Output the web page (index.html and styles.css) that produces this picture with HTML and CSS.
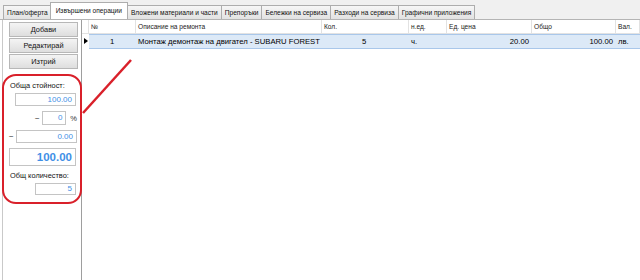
FILE: index.html
```html
<!DOCTYPE html>
<html>
<head>
<meta charset="utf-8">
<link rel="stylesheet" href="styles.css">
</head>
<body>
<div class="app">
  <div class="tabbar">
    <div class="tab">План/оферта</div>
    <div class="tab active">Извършени операции</div>
    <div class="tab">Вложени материали и части</div>
    <div class="tab">Препоръки</div>
    <div class="tab">Бележки на сервиза</div>
    <div class="tab">Разходи на сервиза</div>
    <div class="tab">Графични приложения</div>
  </div>
  <div class="main">
    <div class="side">
      <div class="buttons">
        <div class="btn">Добави</div>
        <div class="btn">Редактирай</div>
        <div class="btn">Изтрий</div>
      </div>
      <div class="summary">
        <div class="lbl">Обща стойност:</div>
        <div class="row r1 right"><div class="inp w60">100.00</div></div>
        <div class="row pct"><span class="minus">−</span><div class="inp w27">0</div><span class="percent">%</span></div>
        <div class="row"><span class="minus m2">−</span><div class="inp w60">0.00</div></div>
        <div class="row"><div class="inp big">100.00</div></div>
        <div class="lbl lbl2">Общ количество:</div>
        <div class="row r1 right"><div class="inp w40">5</div></div>
      </div>
    </div>
    <div class="grid">
      <div class="ghead">
        <div class="c ind"></div>
        <div class="c no">№</div>
        <div class="c desc">Описание на ремонта</div>
        <div class="c qty">Кол.</div>
        <div class="c unit">н.ед.</div>
        <div class="c price">Ед. цена</div>
        <div class="c total">Общо</div>
        <div class="c cur">Вал.</div>
      </div>
      <div class="grow">
        <div class="c ind"><span class="arrow"></span></div>
        <div class="c no n">1</div>
        <div class="c desc">Монтаж демонтаж на двигател - SUBARU FOREST</div>
        <div class="c qty n">5</div>
        <div class="c unit">ч.</div>
        <div class="c price r">20.00</div>
        <div class="c total r">100.00</div>
        <div class="c cur">лв.</div>
      </div>
    </div>
  </div>
  <svg class="pointer" width="640" height="280" viewBox="0 0 640 280"><line x1="131" y1="60" x2="83" y2="113" stroke="#d9202a" stroke-width="2.5"/></svg>
</div>
</body>
</html>
```
FILE: styles.css
```css
* { box-sizing: border-box; }
html, body { margin: 0; padding: 0; }
body { width: 640px; height: 280px; overflow: hidden; background: #fff; font-family: "Liberation Sans", Arial, sans-serif; color: #000; }
.app { position: relative; width: 640px; height: 280px; display: flex; flex-direction: column; }
.tabbar { height: 20px; background: #f0f0f0; display: flex; align-items: flex-end; padding-left: 3px; border-bottom: 1px solid #b4b4b4; flex: none; }
.tab { height: 14px; padding: 0 3px; font-size: 6.6px; line-height: 13px; color: #111; background: linear-gradient(#f6f6f6, #e2e2e2); border: 1px solid #adadad; border-bottom: none; margin-right: -1px; white-space: nowrap; }
.tab.active { height: 17px; background: #fff; line-height: 15px; margin: 0 -1px 0 -1px; position: relative; z-index: 1; padding: 0 5px; }
.main { flex: 1; display: flex; }
.side { width: 80px; margin-left: 2px; border-left: 1px solid #c9c9c9; border-right: 1px solid #9e9e9e; display: flex; flex-direction: column; }
.buttons { padding: 2px 3px 0 6px; display: flex; flex-direction: column; gap: 1px; }
.btn { height: 15px; width: 69px; border: 1px solid #b7b7b7; background: linear-gradient(#f4f4f4, #dedede); font-size: 7.4px; line-height: 13px; text-align: center; color: #111; }
.summary { margin: 5px 0 0 -1px; width: 80px; height: 130px; border: 2.5px solid #d9202a; border-radius: 14px; padding: 5px 3px 0 6px; font-size: 7.4px; }
.lbl { height: 10px; line-height: 10px; color: #111; }
.row { display: flex; align-items: center; margin-top: 5px; }
.r1 { margin-top: 2px; }
.right { justify-content: flex-end; padding-right: 1px; }
.inp { height: 13px; border: 1px solid #c4c4c4; background: #fff; color: #3f8fe6; text-align: right; padding-right: 3px; line-height: 11px; font-size: 8px; }
.w60 { width: 61px; }
.w27 { width: 27px; height: 14px; }
.w40 { width: 41px; height: 12px; line-height: 10px; }
.pct { padding-left: 25px; }
.minus { width: 8px; font-size: 8px; color: #333; }
.m2 { width: 7px; margin-left: -1px; }
.percent { margin-left: 4px; font-size: 7.5px; color: #333; }
.big { width: 67px; height: 18px; margin-left: -1px; font-size: 11.5px; font-weight: bold; line-height: 16px; }
.lbl2 { margin-top: 5px; }
.grid { flex: 1; display: flex; flex-direction: column; padding-top: 0; }
.ghead, .grow { display: flex; }
.ghead { height: 14px; font-size: 6.6px; line-height: 13px; color: #222; }
.ghead .c { border-right: 1px solid #e2e2e2; padding-left: 2px; border-bottom: 1px solid #e2e2e2; }
.grow { height: 15px; font-size: 7.7px; line-height: 14px; color: #000; }
.grow .c { background: #dce9f7; border-top: 1px solid #a9c7ea; border-bottom: 1px solid #a9c7ea; padding-left: 2px; white-space: nowrap; }
.grow .ind { background: #fff; border: none; }
.c { flex: none; }
.ind { width: 7px; padding: 0 !important; position: relative; }
.arrow { position: absolute; left: 2px; top: 4px; border-left: 4px solid #000; border-top: 3.5px solid transparent; border-bottom: 3.5px solid transparent; }
.no { width: 47px; }
.desc { width: 186px; }
.qty { width: 87px; }
.unit { width: 38px; }
.price { width: 85px; }
.total { width: 84px; }
.cur { flex: 1; }
.n { text-align: center; }
.no.n { text-align: left; padding-left: 21px !important; }
.qty.n { padding-left: 40px !important; text-align: left; }
.r { text-align: right; padding-right: 3px; }
.pointer { position: absolute; left: 0; top: 0; pointer-events: none; }
```
